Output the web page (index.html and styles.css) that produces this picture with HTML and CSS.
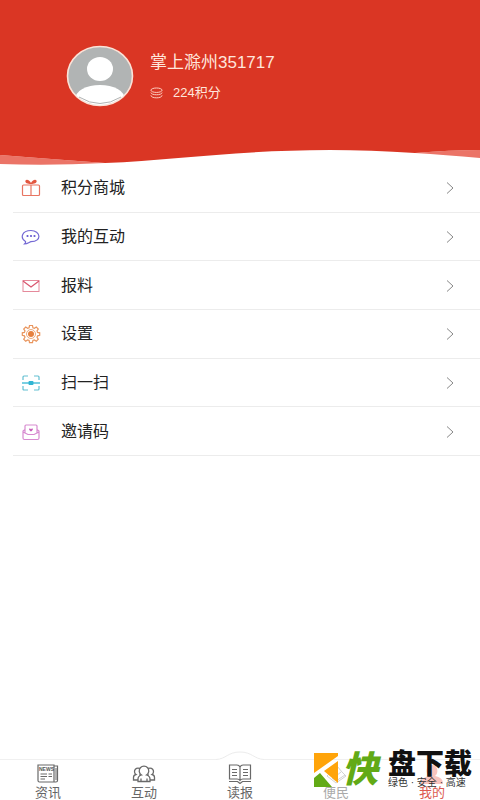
FILE: index.html
```html
<!DOCTYPE html>
<html lang="zh-CN">
<head>
<meta charset="utf-8">
<meta name="viewport" content="width=device-width, initial-scale=1">
<title>我的</title>
<link rel="stylesheet" href="styles.css">
</head>
<body>
<header class="profile">
  <div class="profile-main">
    <svg class="avatar" viewBox="0 0 68 62" aria-hidden="true">
      <defs><clipPath id="face"><ellipse cx="34" cy="31" rx="32" ry="29"/></clipPath></defs>
      <ellipse cx="34" cy="31" rx="32.5" ry="29.5" fill="#b1b4b4" stroke="#fbe3d8" stroke-width="1.6"/>
      <g fill="#fff" clip-path="url(#face)"><ellipse cx="34" cy="24" rx="13" ry="12"/><ellipse cx="34" cy="54" rx="25" ry="14"/></g>
      <path d="M13 52Q34 65 55 52" fill="none" stroke="#b1b4b4"/>
    </svg>
    <div class="profile-info">
      <h1 class="name">掌上滁州351717</h1>
      <p class="points">
        <svg class="coins" viewBox="0 0 14 12" aria-hidden="true"><g fill="none" stroke="#ffd9cc"><ellipse cx="7" cy="3" rx="6" ry="2.4"/><path d="M1 5.500c0 3.200 12 3.200 12 0M1 8.500c0 3.600 12 3.600 12 0"/></g></svg>
        <span>224积分</span>
      </p>
    </div>
  </div>
  <svg class="wave" viewBox="0 0 480 20" preserveAspectRatio="none" aria-hidden="true">
    <path d="M0 9Q50 13 105 17Q50 20 0 18ZM415 7Q450 4 480 4V12Q445 9 415 7Z" fill="#eb7467"/>
    <path d="M0 0H480V4Q450 4 415 7Q370 4 330 4C240 4 175 14 105 17Q50 13 0 9Z" fill="#da3624"/>
  </svg>
</header>
<main>
  <nav class="menu" aria-label="我的服务">
    <a class="row" href="#mall">
      <svg class="icon" viewBox="0 0 20 20" aria-hidden="true"><g fill="none" stroke="#e87562" stroke-width="1.2"><rect x="1.500" y="7" width="17" height="10.500" rx="1"/><path d="M10 7v10.500"/></g><path d="M10 6C7 6 3.500 5 4.500 2.500C6 .5 9 3 10 5C11 3 14 .5 15.500 2.500C16.500 5 13 6 10 6Z" fill="#e3563f"/></svg>
      <span class="label">积分商城</span><svg class="arrow" viewBox="0 0 8 14" aria-hidden="true"><path d="M1 1.500L7 7L1 12.500"/></svg>
    </a>
    <a class="row" href="#interact">
      <svg class="icon" viewBox="0 0 20 20" aria-hidden="true"><path d="M4.500 14.500C-1 11 .5 3.500 10 3.500S21.500 14.500 10 14.700C8.500 15 6.500 17 3.500 17C4.500 16 5 15.500 4.500 14.500Z" fill="none" stroke="#7469d4" stroke-width="1.200"/><g fill="#6558d0"><circle cx="6.500" cy="9" r="1.100"/><circle cx="10" cy="9" r="1.100"/><circle cx="13.500" cy="9" r="1.100"/></g></svg>
      <span class="label">我的互动</span><svg class="arrow" viewBox="0 0 8 14" aria-hidden="true"><path d="M1 1.500L7 7L1 12.500"/></svg>
    </a>
    <a class="row" href="#report">
      <svg class="icon" viewBox="0 0 20 20" aria-hidden="true"><rect x="2" y="4.500" width="16" height="11" fill="none" stroke="#e58a9b"/><path d="M2 5L10 11L18 5" fill="none" stroke="#d9566f" stroke-width="1.200"/></svg>
      <span class="label">报料</span><svg class="arrow" viewBox="0 0 8 14" aria-hidden="true"><path d="M1 1.500L7 7L1 12.500"/></svg>
    </a>
    <a class="row" href="#settings">
      <svg class="icon" viewBox="0 0 20 20" aria-hidden="true"><path d="M8.500 1.500h3l.4 2.200 1.500.6 1.900-1.300 2 2-1.300 1.900.6 1.500 2.100.4v2.500l-2.100.5-.6 1.500 1.300 1.900-2 2-1.900-1.300-1.500.6-.4 2.100h-3l-.4-2.100-1.500-.6-1.900 1.300-2-2L4 13.300l-.6-1.500-2.100-.5V8.800l2.100-.4L4 6.900 2.700 5l2-2 1.900 1.300 1.500-.6Z" fill="none" stroke="#e9955d" stroke-width="1.200"/><circle cx="10" cy="10" r="4.500" fill="none" stroke="#edaa7e"/><circle cx="10" cy="10" r="3" fill="#e6813f"/></svg>
      <span class="label">设置</span><svg class="arrow" viewBox="0 0 8 14" aria-hidden="true"><path d="M1 1.500L7 7L1 12.500"/></svg>
    </a>
    <a class="row" href="#scan">
      <svg class="icon" viewBox="0 0 20 20" aria-hidden="true"><path d="M2 7V4Q2 3 3 3H7M13 3H17Q18 3 18 4V7M18 13V16Q18 17 17 17H13M7 17H3Q2 17 2 16V13" fill="none" stroke="#62bfd1" stroke-width="1.200"/><path d="M1 10H19" stroke="#32b5d3" stroke-width="1.300"/><rect x="7.500" y="8" width="5" height="4" rx="1" fill="#32b5d3"/></svg>
      <span class="label">扫一扫</span><svg class="arrow" viewBox="0 0 8 14" aria-hidden="true"><path d="M1 1.500L7 7L1 12.500"/></svg>
    </a>
    <a class="row" href="#invite">
      <svg class="icon" viewBox="0 0 20 20" aria-hidden="true"><path d="M4 10.500V4Q4 3 5 3H15Q16 3 16 4V10.500M4 7.500L2 9V16Q2 17.500 3.500 17.500H16.500Q18 17.500 18 16V9L16 7.500M2 10L7 12.500H13L18 10" fill="none" stroke="#d78bd0" stroke-width="1.200"/><path d="M10 9.500C6.500 7 8.500 5.500 10 7C11.500 5.500 13.500 7 10 9.500Z" fill="#c95fba"/></svg>
      <span class="label">邀请码</span><svg class="arrow" viewBox="0 0 8 14" aria-hidden="true"><path d="M1 1.500L7 7L1 12.500"/></svg>
    </a>
  </nav>
</main>
<footer class="bottom">
  <nav class="tabs" aria-label="主导航">
    <a class="tab" href="#news">
      <svg class="tab-icon" viewBox="0 0 24 20" aria-hidden="true"><g fill="none" stroke="#696969" stroke-width="1.200"><path d="M2 1H18V18H3.500Q2 18 2 16.500ZM18 2H21.500V16.500Q21.500 18 20 18H18"/><path d="M4.500 10H11M4.500 12.500H11M4.500 15H9M12.500 10H16M12.500 12.500H16M20 4V16" stroke-width="1"/></g><text x="3" y="7" class="news-mark">NEWS</text></svg>
      <span>资讯</span>
    </a>
    <a class="tab" href="#community">
      <svg class="tab-icon" viewBox="0 0 24 20" aria-hidden="true"><g fill="#fff" stroke="#696969" stroke-width="1.300"><path d="M1.500 16V13.500Q1.500 11 4 10.500A3.500 3.500 0 1 1 8 10.500V16ZM22.500 16V13.500Q22.500 11 20 10.500A3.500 3.500 0 1 0 16 10.500V16Z"/><path d="M6 17.500V15Q6 12 9.500 11A4.800 4.800 0 1 1 14.500 11Q18 12 18 15V17.500Z"/><path d="M9 14.500v3M15 14.500v3"/></g></svg>
      <span>互动</span>
    </a>
    <a class="tab" href="#paper">
      <svg class="arch" viewBox="0 0 48 9" aria-hidden="true"><path d="M0 8.500C10 8 12 1 24 1S38 8 48 8.500V9H0Z" fill="#fff"/><path d="M0 8.500C10 8 12 1 24 1S38 8 48 8.500" fill="none" stroke="#ececec"/></svg>
      <svg class="tab-icon" viewBox="0 0 24 20" aria-hidden="true"><g fill="none" stroke="#696969" stroke-width="1.200"><path d="M12 3Q11 1 9 1H1.500V15H9Q11 15 12 16.500Q13 15 15 15H22.500V1H15Q13 1 12 3V16M1 17.500H9.500L12 19.500L14.500 17.500H23"/><path d="M4 5.500H9M4 8.500H9M4 11.500H9M15 5.500H20M15 8.500H20M15 11.500H20"/></g></svg>
      <span>读报</span>
    </a>
    <a class="tab faded" href="#service">
      <svg class="tab-icon" viewBox="0 0 24 20" aria-hidden="true"><g fill="none" stroke="#d2d2d2"><path d="M3 12L13 2L18 8L22 12L12 19ZM8 9L12 12L17 8M8 14L12 17L21 11"/></g></svg>
      <span>便民</span>
    </a>
    <a class="tab current" href="#me" aria-current="page">
      <svg class="tab-icon" viewBox="0 0 24 20" aria-hidden="true"><path d="M12 1C6 1 5 9 9 12C4 13 1 15 1 20H23C23 15 20 13 15 12C19 9 18 1 12 1Z" fill="#f9c4be"/></svg>
      <span>我的</span>
    </a>
  </nav>
  <div class="brand">
    <svg class="brand-logo" viewBox="0 0 24 34" aria-hidden="true"><path d="M0 0H24V3L0 20ZM24 8V30L10 18Z" fill="#ffa40a"/><path d="M0 25L6 20L18 34H0Z" fill="#62aa16"/></svg>
    <span class="brand-first">快</span>
    <div class="brand-copy"><strong class="brand-name">盘下载</strong><span class="brand-note">绿色 · 安全 · 高速</span></div>
  </div>
</footer>
</body>
</html>
```
FILE: styles.css
```css
* { box-sizing: border-box; }

body {
  margin: 0;
  min-height: 100vh;
  display: flex;
  flex-direction: column;
  background: #fff;
  color: #222;
  font-family: "Liberation Sans", "Noto Sans CJK SC", sans-serif;
}

a { color: inherit; text-decoration: none; }
svg { display: block; flex: none; }
main { flex: 1; }

.profile-main {
  display: flex;
  align-items: flex-start;
  gap: 16px;
  height: 146px;
  padding: 45px 20px 0 66px;
  background: #da3624;
  color: #ffe6dc;
}
.avatar { width: 68px; height: 62px; }
.profile-info { padding-top: 6px; }
.name { margin: 0; font-size: 17px; line-height: 24px; font-weight: 400; }
.points {
  display: flex;
  align-items: center;
  gap: 10px;
  margin: 8px 0 0;
  font-size: 13px;
  line-height: 20px;
}
.coins { width: 13px; height: 12px; }
.wave { width: 100%; height: 20px; }

.menu {
  display: grid;
  grid-auto-rows: 1fr;
  height: 292px;
  margin-top: -2px;
  padding-left: 13px;
}
.row {
  display: flex;
  align-items: center;
  padding: 1px 26px 0 8px;
  border-bottom: 1px solid #ececec;
  font-size: 16px;
  line-height: 20px;
}
.icon { width: 20px; height: 20px; margin-right: 20px; }
.label { flex: 1; }
.arrow { width: 8px; height: 14px; fill: none; stroke: #888; }

.bottom { position: relative; }
.tabs {
  display: grid;
  grid-template-columns: repeat(5, 1fr);
  height: 41px;
  border-top: 1px solid #f0f0f0;
}
.tab {
  position: relative;
  display: flex;
  flex-direction: column;
  align-items: center;
  gap: 2px;
  padding-top: 4px;
  color: #666;
  font-size: 13px;
  line-height: 14px;
}
.tab-icon { width: 24px; height: 20px; }
.news-mark { font-size: 5px; font-weight: 700; fill: #555; }
.arch { position: absolute; top: -9px; width: 48px; height: 9px; }
.faded { color: #aaa; }
.current { color: #dc5b50; }

.brand {
  position: absolute;
  right: 8px;
  bottom: 12px;
  display: flex;
  align-items: center;
  gap: 4px;
  pointer-events: none;
}
.brand-logo { width: 24px; height: 34px; }
.brand-first {
  color: #62aa16;
  font-size: 36px;
  line-height: 36px;
  font-style: italic;
  font-weight: 900;
}
.brand-copy { display: flex; flex-direction: column; padding-left: 6px; }
.brand-name { color: #111; font-size: 28px; line-height: 26px; font-weight: 900; }
.brand-note { color: #333; font-size: 10px; line-height: 10px; }
```
